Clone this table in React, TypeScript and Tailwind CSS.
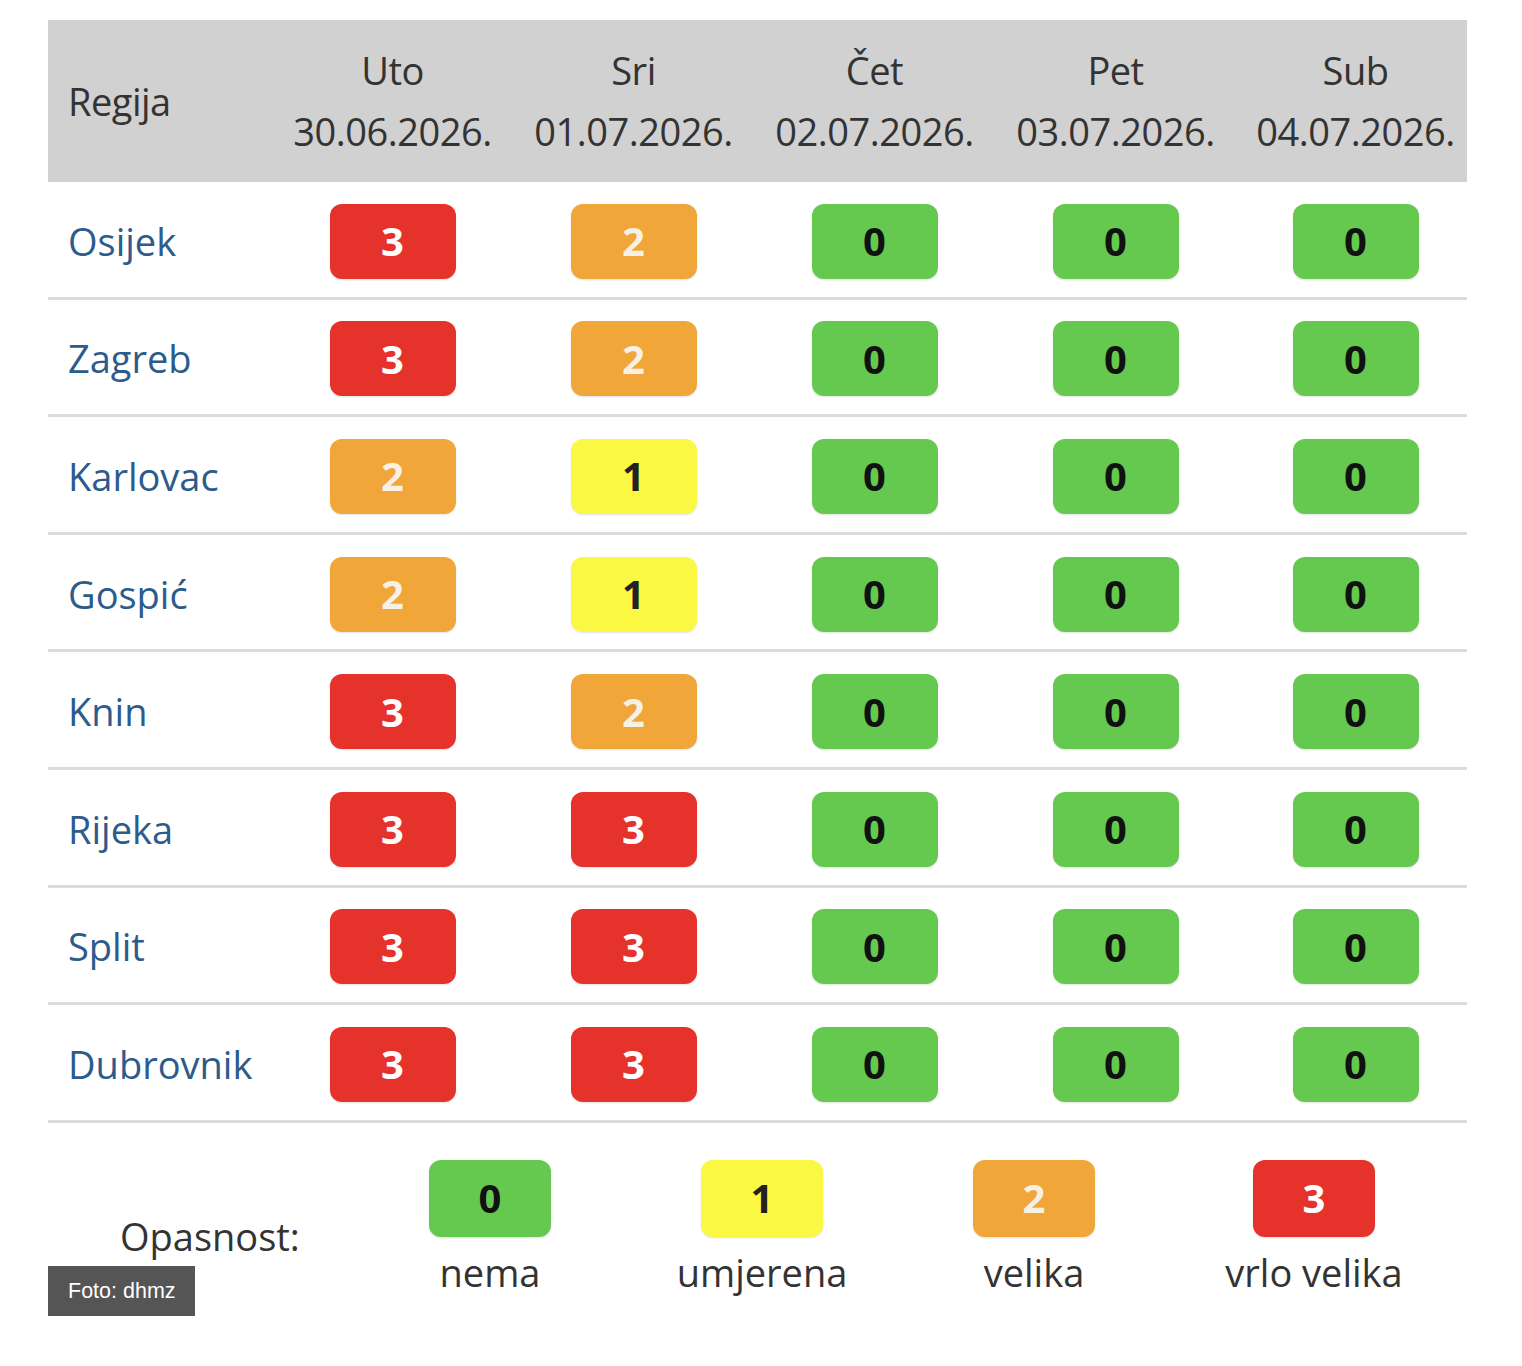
const days = [
  { name: 'Uto', date: '30.06.2026.' },
  { name: 'Sri', date: '01.07.2026.' },
  { name: 'Čet', date: '02.07.2026.' },
  { name: 'Pet', date: '03.07.2026.' },
  { name: 'Sub', date: '04.07.2026.' },
];

const rows: { region: string; levels: number[] }[] = [
  { region: 'Osijek',    levels: [3, 2, 0, 0, 0] },
  { region: 'Zagreb',    levels: [3, 2, 0, 0, 0] },
  { region: 'Karlovac',  levels: [2, 1, 0, 0, 0] },
  { region: 'Gospić',    levels: [2, 1, 0, 0, 0] },
  { region: 'Knin',      levels: [3, 2, 0, 0, 0] },
  { region: 'Rijeka',    levels: [3, 3, 0, 0, 0] },
  { region: 'Split',     levels: [3, 3, 0, 0, 0] },
  { region: 'Dubrovnik', levels: [3, 3, 0, 0, 0] },
];

const legend = [
  { level: 0, label: 'nema' },
  { level: 1, label: 'umjerena' },
  { level: 2, label: 'velika' },
  { level: 3, label: 'vrlo velika' },
];

const badgeColor: Record<number, string> = {
  0: 'bg-[#65c94f] text-[#111]',
  1: 'bg-[#fbf843] text-[#222]',
  2: 'bg-[#f0a638] text-[#f7f1e4]',
  3: 'bg-[#e5322a] text-white',
};

function Badge({ level, legend = false }: { level: number; legend?: boolean }) {
  const size = legend ? 'w-[122px] h-[77px]' : 'w-[126px] h-[75px]';
  return (
    <div
      className={`${size} ${badgeColor[level]} rounded-[12px] flex items-center justify-center text-[40px] font-bold shadow-[0_1px_2px_rgba(0,0,0,0.12)]`}
    >
      {level}
    </div>
  );
}

const cols = 'grid grid-cols-[224px_241px_241px_241px_241px_231px]';

export default function App() {
  return (
    <div className="relative min-h-[1366px] bg-white font-['Open_Sans',sans-serif]">
      <div className="ml-[48px] pt-[20px] w-[1419px]">
        {/* header */}
        <div className={`${cols} h-[162px] bg-[#d1d1d1] text-[#333] text-[38px] tracking-[-0.5px]`}>
          <div className="flex items-center pl-[20px]">Regija</div>
          {days.map((d, i) => (
            <div
              key={d.date}
              className={`flex flex-col items-center justify-center leading-[61px] whitespace-nowrap ${i === 4 ? 'pl-[8px]' : ''}`}
            >
              <span>{d.name}</span>
              <span>{d.date}</span>
            </div>
          ))}
        </div>

        {/* rows */}
        {rows.map((r) => (
          <div key={r.region} className={`${cols} h-[117.6px] pt-[4px] border-b-[3px] border-[#dcdcdc]`}>
            <div className="flex items-center pl-[20px] text-[38px] text-[#2c5b8c]">{r.region}</div>
            {r.levels.map((lv, i) => (
              <div key={i} className={`flex items-center justify-center ${i === 4 ? 'pl-[8px]' : ''}`}>
                <Badge level={lv} />
              </div>
            ))}
          </div>
        ))}

        {/* legend */}
        <div className="grid grid-cols-[306px_272px_272px_272px_288px] pt-[37px] text-[38px] text-[#333]">
          <div className="flex items-center pl-[72px] pt-[16px]">Opasnost:</div>
          {legend.map((l) => (
            <div key={l.level} className="flex flex-col items-center">
              <Badge level={l.level} legend />
              <span className="mt-[9px] leading-[52px]">{l.label}</span>
            </div>
          ))}
        </div>
      </div>

      <div className="absolute left-[48px] top-[1266px] w-[147px] h-[50px] bg-[#555] text-white text-[21.5px] flex items-center pl-[20px] font-['Liberation_Sans',sans-serif]">
        Foto: dhmz
      </div>
    </div>
  );
}
